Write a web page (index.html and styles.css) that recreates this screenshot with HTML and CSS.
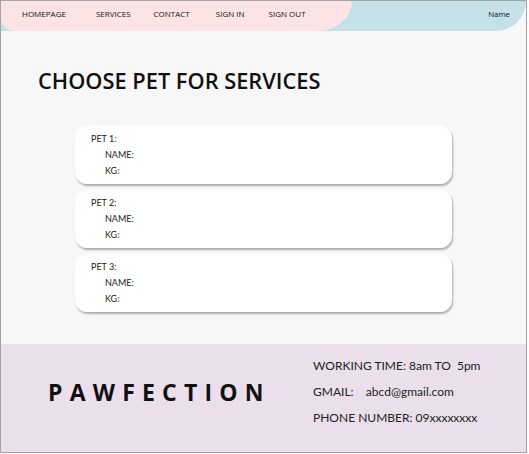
FILE: index.html
```html
<!DOCTYPE html>
<html>
<head>
<meta charset="utf-8">
<link rel="stylesheet" href="styles.css">
</head>
<body>
<div class="frame">
  <header class="nav">
    <div class="nav-left">
      <span class="nav-link l1">HOMEPAGE</span>
      <span class="nav-link l2">SERVICES</span>
      <span class="nav-link l3">CONTACT</span>
      <span class="nav-link l4">SIGN IN</span>
      <span class="nav-link l5">SIGN OUT</span>
    </div>
    <span class="nav-name">Name</span>
  </header>
  <main class="main">
    <h1 class="title">CHOOSE PET FOR SERVICES</h1>
    <div class="cards">
      <div class="card">
        <div class="pet">PET 1:</div>
        <div class="field">NAME:</div>
        <div class="field">KG:</div>
      </div>
      <div class="card">
        <div class="pet">PET 2:</div>
        <div class="field">NAME:</div>
        <div class="field">KG:</div>
      </div>
      <div class="card">
        <div class="pet">PET 3:</div>
        <div class="field">NAME:</div>
        <div class="field">KG:</div>
      </div>
    </div>
  </main>
  <footer class="footer">
    <div class="brand">PAWFECTION</div>
    <div class="info">
      <div class="info-line">WORKING TIME: 8am TO&nbsp; 5pm</div>
      <div class="info-line">GMAIL:&nbsp;&nbsp;&nbsp; abcd@gmail.com</div>
      <div class="info-line">PHONE NUMBER: 09xxxxxxxx</div>
    </div>
  </footer>
</div>
</body>
</html>
```
FILE: styles.css
```css
* { box-sizing: border-box; }
html, body { margin: 0; padding: 0; background: #ffffff; }
body { font-family: "Lato", "Open Sans", sans-serif; color: #222; }

.frame {
  width: 527px;
  height: 453px;
  border: 1px solid #a3a3a3;
  background: #f7f7f7;
  display: flex;
  flex-direction: column;
}

.nav {
  height: 30px;
  background: #c3e1e6;
  border-bottom-right-radius: 30px;
  display: flex;
  align-items: flex-start;
  justify-content: space-between;
  flex-shrink: 0;
}
.nav-left {
  width: 351px;
  height: 30px;
  background: #fce3e6;
  border-radius: 0 0 34px 16px / 0 0 30px 12px;
  display: flex;
  align-items: flex-start;
  padding: 7px 0 0 21px;
}
.nav-link {
  font-family: "Open Sans", sans-serif;
  font-size: 8px;
  line-height: 12px;
  color: #111;
}
.l2 { margin-left: 30px; }
.l3 { margin-left: 23px; }
.l4 { margin-left: 26px; }
.l5 { margin-left: 24px; }
.nav-name {
  font-family: "Open Sans", sans-serif;
  font-size: 7.8px;
  line-height: 12px;
  margin-top: 7px;
  color: #111;
  margin-right: 16px;
}

.main {
  flex: 1;
  padding: 36px 0 0 37px;
}
.title {
  margin: 0;
  font-family: "Open Sans", sans-serif;
  font-weight: 600;
  font-size: 21.8px;
  line-height: 28px;
  color: #111;
}
.cards {
  margin-top: 31px;
  margin-left: 37px;
  width: 377px;
  display: flex;
  flex-direction: column;
  gap: 6px;
}
.card {
  height: 58px;
  background: #ffffff;
  border-radius: 12px;
  box-shadow: 1px 2px 2px rgba(0, 0, 0, 0.3);
  padding: 5px 0 0 16px;
  font-family: "Lato", sans-serif;
  font-size: 9px;
  color: #222;
}
.pet { line-height: 16px; }
.field { line-height: 16px; padding-left: 14px; }

.footer {
  height: 108px;
  flex-shrink: 0;
  background: #ebdfeb;
  display: flex;
  align-items: center;
  padding-bottom: 13px;
}
.brand {
  width: 264px;
  padding-left: 47px;
  font-family: "Open Sans", sans-serif;
  font-weight: 700;
  font-size: 23px;
  letter-spacing: 7.2px;
  white-space: nowrap;
  color: #111;
}
.info {
  margin-left: 48px;
  font-family: "Lato", sans-serif;
  font-size: 12px;
  color: #222;
  display: flex;
  flex-direction: column;
  gap: 9px;
}
.info-line { line-height: 17px; }
```
